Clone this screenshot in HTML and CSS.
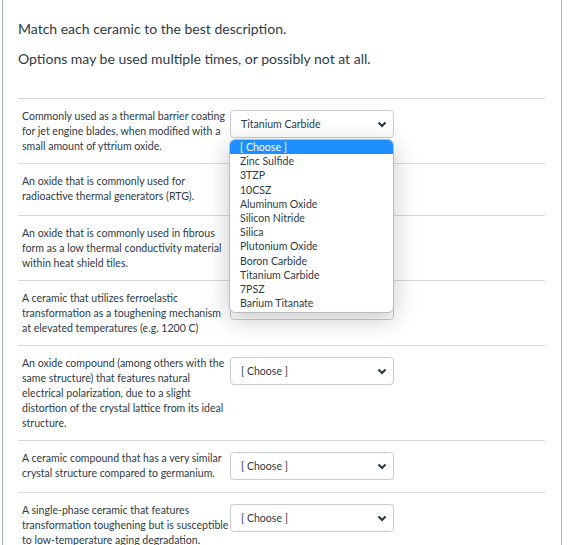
FILE: index.html
```html
<!DOCTYPE html>
<html>
<head>
<meta charset="utf-8">
<link rel="stylesheet" href="styles.css">
</head>
<body>
<div class="quiz">
  <div class="intro">
    <p>Match each ceramic to the best description.</p>
    <p>Options may be used multiple times, or possibly not at all.</p>
  </div>
  <div class="rows">
    <div class="row">
      <div class="q">Commonly used as a thermal barrier coating for jet engine blades, when modified with a small amount of yttrium oxide.</div>
      <div class="ans">
        <div class="select"><span>Titanium Carbide</span><svg class="chev" width="10" height="7" viewBox="0 0 10 7"><path d="M1.5 1.5 L5 5 L8.5 1.5" fill="none" stroke="#2d3b45" stroke-width="2.2"/></svg></div>
        <ul class="dropdown">
          <li class="hl">[ Choose ]</li>
          <li>Zinc Sulfide</li>
          <li>3TZP</li>
          <li>10CSZ</li>
          <li>Aluminum Oxide</li>
          <li>Silicon Nitride</li>
          <li>Silica</li>
          <li>Plutonium Oxide</li>
          <li>Boron Carbide</li>
          <li>Titanium Carbide</li>
          <li>7PSZ</li>
          <li>Barium Titanate</li>
        </ul>
      </div>
    </div>
    <div class="row">
      <div class="q">An oxide that is commonly used for radioactive thermal generators (RTG).</div>
      <div class="ans"><div class="select"><span>[ Choose ]</span><svg class="chev" width="10" height="7" viewBox="0 0 10 7"><path d="M1.5 1.5 L5 5 L8.5 1.5" fill="none" stroke="#2d3b45" stroke-width="2.2"/></svg></div></div>
    </div>
    <div class="row">
      <div class="q">An oxide that is commonly used in fibrous form as a low thermal conductivity material within heat shield tiles.</div>
      <div class="ans"><div class="select"><span>[ Choose ]</span><svg class="chev" width="10" height="7" viewBox="0 0 10 7"><path d="M1.5 1.5 L5 5 L8.5 1.5" fill="none" stroke="#2d3b45" stroke-width="2.2"/></svg></div></div>
    </div>
    <div class="row">
      <div class="q">A ceramic that utilizes ferroelastic transformation as a toughening mechanism at elevated temperatures (e.g. 1200 C)</div>
      <div class="ans"><div class="select"><span>[ Choose ]</span><svg class="chev" width="10" height="7" viewBox="0 0 10 7"><path d="M1.5 1.5 L5 5 L8.5 1.5" fill="none" stroke="#2d3b45" stroke-width="2.2"/></svg></div></div>
    </div>
    <div class="row">
      <div class="q">An oxide compound (among others with the same structure) that features natural electrical polarization, due to a slight distortion of the crystal lattice from its ideal structure.</div>
      <div class="ans"><div class="select"><span>[ Choose ]</span><svg class="chev" width="10" height="7" viewBox="0 0 10 7"><path d="M1.5 1.5 L5 5 L8.5 1.5" fill="none" stroke="#2d3b45" stroke-width="2.2"/></svg></div></div>
    </div>
    <div class="row">
      <div class="q">A ceramic compound that has a very similar crystal structure compared to germanium.</div>
      <div class="ans"><div class="select"><span>[ Choose ]</span><svg class="chev" width="10" height="7" viewBox="0 0 10 7"><path d="M1.5 1.5 L5 5 L8.5 1.5" fill="none" stroke="#2d3b45" stroke-width="2.2"/></svg></div></div>
    </div>
    <div class="row">
      <div class="q">A single-phase ceramic that features transformation toughening but is susceptible to low-temperature aging degradation.</div>
      <div class="ans"><div class="select"><span>[ Choose ]</span><svg class="chev" width="10" height="7" viewBox="0 0 10 7"><path d="M1.5 1.5 L5 5 L8.5 1.5" fill="none" stroke="#2d3b45" stroke-width="2.2"/></svg></div></div>
    </div>
  </div>
</div>
</body>
</html>
```

FILE: styles.css
```css
html, body {
  margin: 0;
  padding: 0;
  background: #ffffff;
}
body {
  font-family: Lato, "Open Sans", sans-serif;
  color: #2d3b45;
  height: 545px;
  overflow: hidden;
}
.quiz {
  box-sizing: border-box;
  margin-left: 2px;
  width: 560px;
  min-height: 560px;
  border-left: 1px solid #a9b1b6;
  border-right: 1px solid #a9b1b6;
  padding: 0 16px 0 15px;
}
.intro {
  padding-top: 19px;
  padding-bottom: 29px;
}
.intro p {
  margin: 0 0 10px 0;
  font-size: 14px;
  line-height: 20px;
}
.intro p:last-child {
  margin-bottom: 0;
}
.rows {
  display: flex;
  flex-direction: column;
}
.row {
  display: flex;
  align-items: flex-start;
  border-top: 1px solid #d7dadc;
  padding: 10px 0 9px 4px;
}
.q {
  width: 208px;
  font-size: 10.55px;
  line-height: 15px;
}
.ans {
  position: relative;
  margin-top: 1px;
  margin-bottom: 3px;
}
.select {
  box-sizing: border-box;
  width: 164px;
  height: 28px;
  border: 1px solid #c7cdd1;
  border-radius: 4px;
  display: flex;
  align-items: center;
  justify-content: space-between;
  padding: 0 6px 0 10px;
  font-size: 10.55px;
  background: #fff;
}
.chev {
  display: block;
}
.dropdown {
  position: absolute;
  left: -1px;
  top: 29px;
  width: 165px;
  box-sizing: border-box;
  margin: 0;
  padding: 0 0 2px 0;
  list-style: none;
  background: #fff;
  border: 1px solid #b9bec2;
  border-radius: 6px;
  box-shadow: 0 6px 24px rgba(0, 0, 0, 0.22);
  font-size: 10.55px;
  z-index: 5;
  overflow: hidden;
}
.dropdown li {
  height: 14.2px;
  line-height: 14.2px;
  padding-left: 10px;
}
.dropdown li.hl {
  background: #1e8fff;
  color: #fff;
}
```
